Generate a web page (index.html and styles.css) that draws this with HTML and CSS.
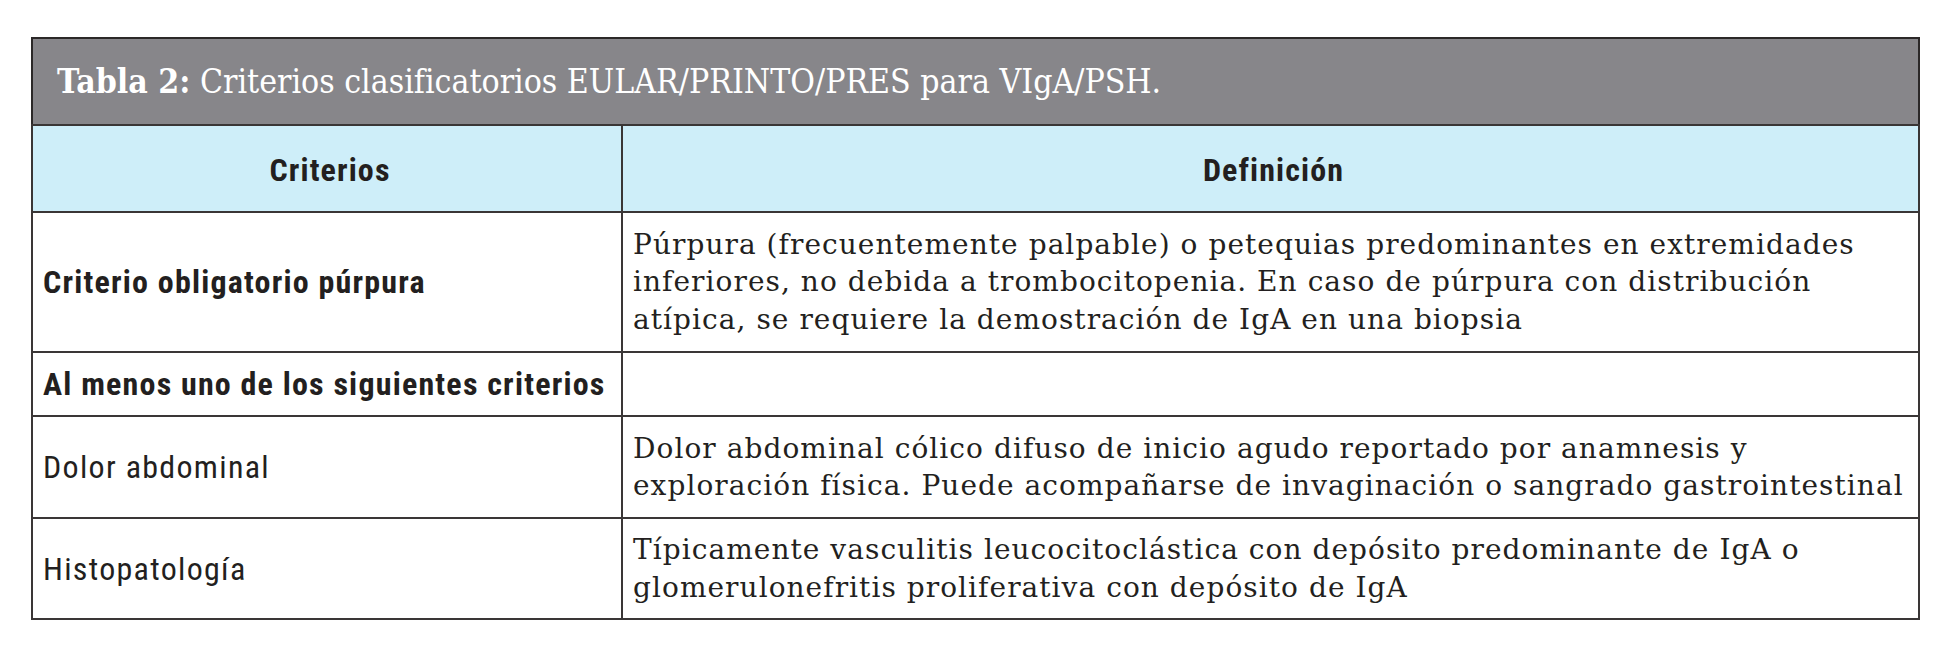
FILE: index.html
```html
<!DOCTYPE html>
<html lang="es">
<head>
<meta charset="utf-8">
<title>Tabla 2</title>
<link rel="stylesheet" href="styles.css">
</head>
<body>
<div class="page">
  <table class="crit">
    <caption class="title"><b>Tabla 2:</b> Criterios clasificatorios EULAR/PRINTO/PRES para VIgA/PSH.</caption>
    <colgroup><col class="c1"><col class="c2"></colgroup>
    <thead>
      <tr class="head"><th>Criterios</th><th>Definición</th></tr>
    </thead>
    <tbody>
      <tr class="r1">
        <td class="k strong">Criterio obligatorio púrpura</td>
        <td class="v">Púrpura (frecuentemente palpable) o petequias predominantes en extremidades inferiores, no debida a trombocitopenia. En caso de púrpura con distribución atípica, se requiere la demostración de IgA en una biopsia</td>
      </tr>
      <tr class="r2">
        <td class="k strong">Al menos uno de los siguientes criterios</td>
        <td class="v"></td>
      </tr>
      <tr class="r3">
        <td class="k">Dolor abdominal</td>
        <td class="v">Dolor abdominal cólico difuso de inicio agudo reportado por anamnesis y exploración física. Puede acompañarse de invaginación o sangrado gastrointestinal</td>
      </tr>
      <tr class="r4">
        <td class="k">Histopatología</td>
        <td class="v">Típicamente vasculitis leucocitoclástica con depósito predominante de IgA o glomerulonefritis proliferativa con depósito de IgA</td>
      </tr>
    </tbody>
  </table>
</div>
</body>
</html>
```
FILE: styles.css
```css
html, body { margin: 0; padding: 0; background: #ffffff; }
.page { padding: 37px 0 0 31px; }
.crit {
  width: 1889px;
  border-collapse: collapse;
  table-layout: fixed;
  color: #231f20;
  border: 2px solid #2b2828;
}
.c1 { width: 590px; }
.title {
  caption-side: top;
  text-align: left;
  background: #87868a;
  color: #ffffff;
  font-family: "DejaVu Serif Condensed", "DejaVu Serif", serif;
  font-size: 33.5px;
  font-weight: normal;
  height: 87px;
  box-sizing: border-box;
  padding: 0 24px;
  line-height: 86px;
  border: 2px solid #2b2828;
  border-bottom: 0;
}
.crit th, .crit td { border: 2px solid #3a3636; padding: 0 4px 0 10px; }
.head th {
  background: #ceeef9;
  height: 83px;
  font-family: "Roboto", sans-serif;
  font-stretch: condensed;
  font-weight: 700;
  font-size: 32px;
  letter-spacing: 1.1px;
  text-align: center;
  padding-top: 2px;
}
.k {
  font-family: "Roboto", sans-serif;
  font-stretch: condensed;
  font-size: 32px;
  letter-spacing: 1.3px;
  font-weight: 400;
}
.k.strong { font-weight: 700; letter-spacing: 1.2px; }
.v {
  font-family: "DejaVu Serif", serif;
  font-size: 28px;
  letter-spacing: 1.05px;
  line-height: 37.5px;
  padding-left: 11px;
  padding-right: 0;
  padding-top: 5px;
}
.r1 td { height: 138px; }
.r2 td { height: 62px; }
.r3 td { height: 100px; }
.r4 td { height: 99px; }
```
